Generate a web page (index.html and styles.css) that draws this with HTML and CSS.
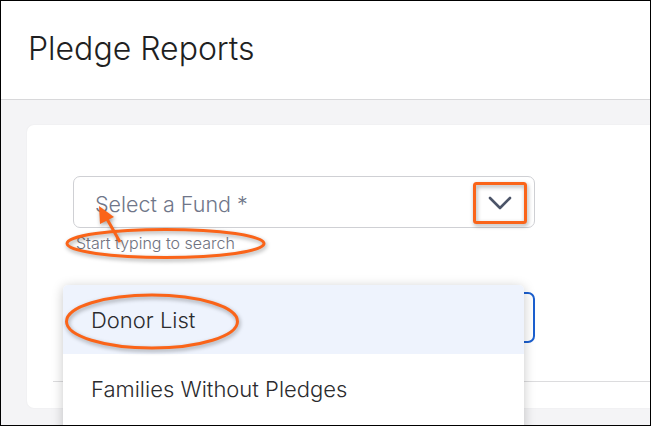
FILE: index.html
```html
<html>
	<head>
		<title>Pledge Reports</title>
		<link rel="stylesheet" href="styles.css">
	</head>
	<body>
		<div id="frame">
			<div class="pageHeader">
				<h1 class="pageTitle">Pledge Reports</h1>
			</div>
			<div class="pageBody">
				<div class="card">
					<div class="field">
						<div class="selectBox">
							<span class="placeholder">Select a Fund *</span>
							<svg class="chevron" width="24" height="16" viewBox="0 0 24 16">
								<polyline points="2,3 12,13 22,3" fill="none" stroke="#4b5468" stroke-width="2.6" stroke-linecap="round" stroke-linejoin="round"/>
							</svg>
						</div>
						<div class="helper">Start typing to search</div>
					</div>
					<div class="field reportField">
						<div class="selectBox focused"></div>
						<div class="menu">
							<div class="menuItem active">Donor List</div>
							<div class="menuItem">Families Without Pledges</div>
						</div>
					</div>
					<div class="divider"></div>
				</div>
			</div>
			<svg class="marks" width="651" height="426" viewBox="0 0 651 426">
				<g fill="none" stroke="#fa6419" stroke-width="3">
					<rect x="474.5" y="183.5" width="51" height="39" rx="2"/>
					<ellipse cx="165.5" cy="243.5" rx="98.5" ry="14"/>
					<ellipse cx="152" cy="321.5" rx="85.5" ry="26.5"/>
					<line x1="120" y1="242" x2="107" y2="219"/>
				</g>
				<polygon points="99,206 114,217 100,224" fill="#fa6419"/>
			</svg>
		</div>
	</body>
</html>
```

FILE: styles.css
```css
body {
	margin:0;
	font-family: Inter, "Noto Sans", sans-serif;
	background-color:#ffffff;
}

#frame {
	position:relative;
	width:651px;
	height:426px;
	box-sizing:border-box;
	border:1px solid #000;
	overflow:hidden;
	background-color:#f4f4f6;
}

.pageHeader {
	height:98px;
	background-color:#fff;
	border-bottom:1px solid #d8d8da;
	display:flex;
	align-items:center;
	padding-left:27px;
}

.pageTitle {
	margin:0;
	font-size:32px;
	font-weight:300;
	color:#1f1f22;
	padding-bottom:4px;
}

.pageBody {
	padding:25px 0 0 26px;
}

.card {
	background-color:#fff;
	border-radius:7px 0 0 7px;
	height:283px;
	box-sizing:border-box;
	padding:51px 0 0 46px;
	box-shadow:0px 0px 2px rgba(0,0,0,0.06);
}

.field {
	width:462px;
}

.selectBox {
	height:52px;
	box-sizing:border-box;
	border:1px solid #cfd0d4;
	border-radius:7px;
	display:flex;
	align-items:center;
	justify-content:space-between;
	padding:0 22px 0 21px;
}

.placeholder {
	font-size:21.5px;
	font-weight:300;
	color:#6f7689;
	padding-top:4px;
}

.chevron {
	margin-top:2px;
}

.helper {
	font-size:16px;
	font-weight:300;
	color:#6f7280;
	margin:5px 0 0 3px;
	line-height:20px;
}

.reportField {
	position:relative;
	margin-top:39px;
}

.selectBox.focused {
	height:51px;
	border:2px solid #1b5fcf;
}

.menu {
	position:absolute;
	left:-10px;
	top:-7px;
	width:461px;
	min-height:170px;
	background-color:#fff;
	border-radius:5px 5px 0 0;
	box-shadow:0px 2px 12px rgba(0,0,0,0.22);
	z-index:5;
}

.menuItem {
	height:70px;
	display:flex;
	align-items:center;
	padding-left:28px;
	font-size:22px;
	font-weight:300;
	color:#2b2b2e;
}

.menuItem.active {
	height:69px;
	background-color:#eef3fd;
	border-radius:5px 5px 0 0;
}

.divider {
	margin:38px 0 0 -20px;
	border-top:1px solid #dcdcde;
}

.marks {
	position:absolute;
	left:-1px;
	top:-1px;
	z-index:10;
	filter:drop-shadow(1px 2px 2px rgba(0,0,0,0.35));
}
```
